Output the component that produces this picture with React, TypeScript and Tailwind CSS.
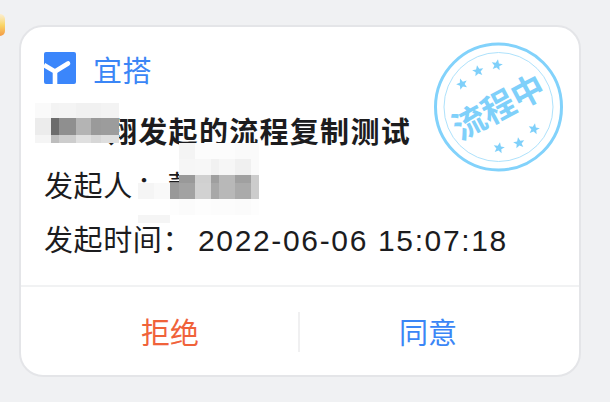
import React from 'react';

const cjk = "font-['Liberation_Sans','Noto_Sans_CJK_SC',sans-serif]";

// one entry per mosaic cell, row by row
const blurCells = [
  '', '', '', 'bg-[#f4f4f4]', 'bg-[#fcfcfc]', 'bg-[#fcfcfc]', 'bg-[#fcfcfc]', 'bg-[#fafafa]', 'bg-[#fafafa]',
  '', '', '', 'bg-[#f6f6f6]', 'bg-[#f7f7f7]', 'bg-[#f1f1f1]', 'bg-[#f6f6f6]', 'bg-[#f0f0f0]', 'bg-[#fafafa]',
  '', '', '', 'bg-[#999999]', 'bg-[#d0d0d0]', 'bg-[#9f9f9f]', 'bg-[#b8b8b8]', 'bg-[#a0a0a0]', 'bg-[#cccccc]',
  'bg-[#f5f5f5]', 'bg-[#f9f9f9]', 'bg-[#999999]', 'bg-[#a2a2a2]', 'bg-[#d2d2d2]', 'bg-[#a8a8a8]', 'bg-[#b8b8b8]', 'bg-[#aaaaaa]', 'bg-[#cccccc]',
  '', '', 'bg-[#fdfdfd]', 'bg-[#fbfbfb]', 'bg-[#fdfdfd]', 'bg-[#fcfcfc]', 'bg-[#fcfcfc]', 'bg-[#fbfbfb]', 'bg-[#fdfdfd]',
  'bg-[#f5f5f5]', 'bg-[#f5f5f5]', '', '', '', '', '', '', '',
];

function Logo() {
  return (
    <svg width="32" height="32" viewBox="0 0 32 32" className="shrink-0">
      <rect width="32" height="32" rx="2" fill="#3b86fb" />
      <path d="M0 13 L11 19.5 V32" fill="none" stroke="#fff" strokeWidth="4.6" />
      <path d="M11 19.5 L24 11.5" fill="none" stroke="#fff" strokeWidth="4.6" strokeLinecap="round" />
    </svg>
  );
}

function Star({ x, y, rotate }: { x: number; y: number; rotate: number }) {
  return (
    <path
      d="M0 -5.8 L1.6 -1.9 L5.6 -1.7 L2.5 0.9 L3.5 4.8 L0 2.6 L-3.5 4.8 L-2.5 0.9 L-5.6 -1.7 L-1.6 -1.9 Z"
      transform={`translate(${x} ${y}) rotate(${rotate})`}
      fill="#7fd0fa"
    />
  );
}

function Stamp() {
  return (
    <svg width="134" height="134" viewBox="0 0 134 134" className="absolute left-[413px] top-[13px]">
      <circle cx="64.5" cy="67" r="63" fill="#fff" fillOpacity="0.3" stroke="#82d2fb" strokeWidth="3" />
      <circle cx="64.5" cy="67" r="54.5" fill="none" stroke="#aee2fc" strokeWidth="1" />
      <Star x={28} y={44} rotate={-20} />
      <Star x={44} y={31} rotate={-10} />
      <Star x={63} y={25} rotate={10} />
      <Star x={100} y={89} rotate={10} />
      <Star x={85} y={103} rotate={-10} />
      <Star x={65} y={108} rotate={10} />
      <text
        x="64.5"
        y="79"
        textAnchor="middle"
        transform="rotate(-28 64.5 67)"
        fill="#7fd0fa"
        fontSize="33"
        fontWeight="700"
        fontFamily="'Noto Sans CJK SC', sans-serif"
      >
        流程中
      </text>
    </svg>
  );
}

function MosaicOne() {
  return (
    <div className="absolute left-[14px] top-[76px] grid grid-cols-[16px_8px_17px_15px_10px_18px] grid-rows-[15px_17px_8px]">
      <div className="bg-[#fafafa]" />
      <div className="bg-[#f3f3f3]" />
      <div className="bg-[#f4f4f4]" />
      <div className="bg-[#f1f1f1]" />
      <div className="bg-[#f1f1f1]" />
      <div className="bg-[#f3f3f3]" />
      <div className="bg-[#ececec]" />
      <div className="bg-[#6c6c6c]" />
      <div className="bg-[#8f8f8f]" />
      <div className="bg-[#b4b4b4]" />
      <div className="bg-[#9a9a9a]" />
      <div className="bg-[#9c9c9c]" />
      <div className="bg-[#f5f5f5]" />
      <div className="bg-[#bdbdbd]" />
      <div className="bg-[#cdcdcd]" />
      <div className="bg-[#e0e0e0]" />
      <div className="bg-[#d7d7d7]" />
      <div className="bg-[#dedede]" />
    </div>
  );
}

function MosaicTwo() {
  return (
    <div className="absolute left-[117px] top-[116px] grid grid-cols-[16px_16px_9px_16px_16px_8px_16px_16px_8px] grid-rows-[16px_16px_8px_16px_16px_8px]">
      {blurCells.map((cell, i) => (
        <div key={i} className={cell} />
      ))}
    </div>
  );
}

export default function App() {
  return (
    <div className={`relative h-[402px] w-[610px] overflow-hidden bg-[#f0f1f3] pl-[19px] pt-[25px] ${cjk}`}>
      <div className="absolute left-[-5px] top-[14px] h-[22px] w-[10px] rounded-full bg-gradient-to-b from-[#fbeed0] via-[#f9d667] to-[#f39a45]" />
      <div className="relative flex h-[352px] w-[562px] flex-col rounded-[24px] border-2 border-[#e4e5e8] bg-white">
        <div className="flex-1 pl-[23px] pt-[25px]">
          <div className="flex h-[32px] items-center gap-[17px]">
            <Logo />
            <span className="mt-[8px] text-[29px] leading-[32px] tracking-[0.5px] text-[#3b86f6]">宜搭</span>
          </div>
          <div className="mt-[29px] pl-[64px] text-[29px] font-bold leading-[40px] tracking-[1.3px] text-[#1c1c1e]">
            翔发起的流程复制测试
          </div>
          <div className="mt-[14px] text-[29px] leading-[40px] tracking-[0.6px] text-[#1c1c1e]">
            发起人<span className="ml-[4px]">：</span><span className="ml-[1px]">董</span>
          </div>
          <div className="mt-[14px] text-[29px] leading-[40px] tracking-[0.6px] text-[#1c1c1e]">
            发起时间：<span className="ml-[6px] text-[30px] tracking-[1.65px]">2022-06-06 15:07:18</span>
          </div>
        </div>
        <MosaicOne />
        <MosaicTwo />
        <Stamp />
        <div className="flex h-[90px] items-center border-t-2 border-[#f1f2f3] pl-[21px] pr-[23px]">
          <button className="flex-1 pt-[5px] text-[29px] leading-[40px] text-[#f0623a]">拒绝</button>
          <div className="mt-[1px] h-[40px] w-[2px] bg-[#f0f0f1]" />
          <button className="flex-1 pt-[5px] text-[29px] leading-[40px] text-[#3b86f6]">同意</button>
        </div>
      </div>
    </div>
  );
}
